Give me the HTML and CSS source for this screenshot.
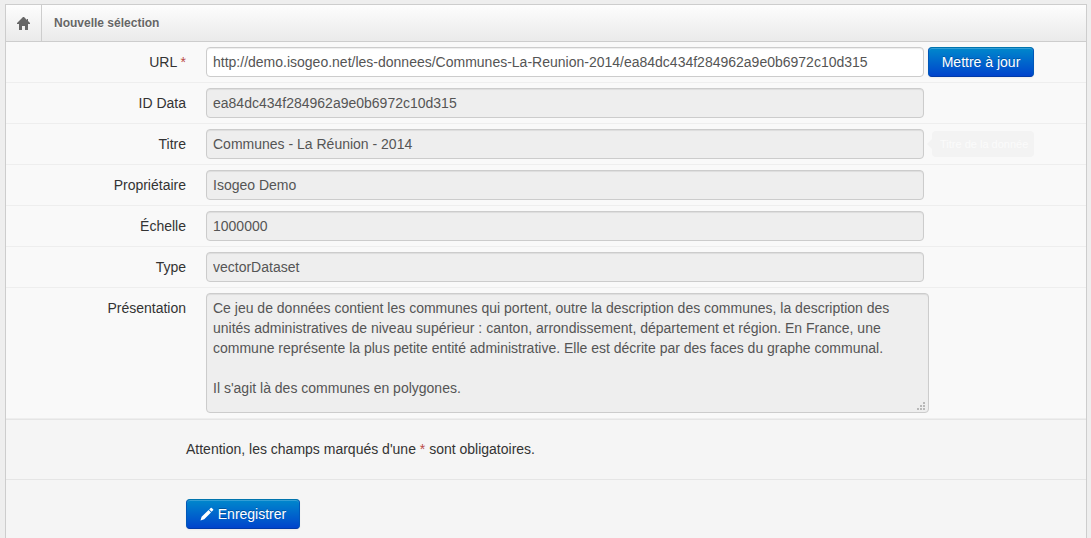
FILE: index.html
```html
<!DOCTYPE html>
<html lang="fr">
<head>
<meta charset="utf-8">
<title>Nouvelle sélection</title>
<link rel="stylesheet" href="styles.css">
</head>
<body>
<main class="widget">
  <header class="widget-title">
    <a class="home" href="#" aria-label="Accueil">
      <svg width="15" height="14" viewBox="0 0 15 14" aria-hidden="true"><path fill="#666" d="M7 0 H8 L11 3 V2 H12 V4 L14 6 V7 H12 V13 H9 V9 H6 V13 H3 V7 H1 V6 Z"/></svg>
    </a>
    <h1>Nouvelle sélection</h1>
  </header>
  <form class="form">
    <div class="row">
      <label for="url">URL <span class="required">*</span></label>
      <input class="field" id="url" type="text" value="http://demo.isogeo.net/les-donnees/Communes-La-Reunion-2014/ea84dc434f284962a9e0b6972c10d315">
      <button class="btn" type="button">Mettre à jour</button>
    </div>
    <div class="row">
      <label for="data">ID Data</label>
      <input class="field" id="data" type="text" readonly value="ea84dc434f284962a9e0b6972c10d315">
    </div>
    <div class="row">
      <label for="titre">Titre</label>
      <input class="field" id="titre" type="text" readonly value="Communes - La Réunion - 2014">
      <span class="tip" role="tooltip">Titre de la donnée</span>
    </div>
    <div class="row">
      <label for="owner">Propriétaire</label>
      <input class="field" id="owner" type="text" readonly value="Isogeo Demo">
    </div>
    <div class="row">
      <label for="scale">Échelle</label>
      <input class="field" id="scale" type="text" readonly value="1000000">
    </div>
    <div class="row">
      <label for="type">Type</label>
      <input class="field" id="type" type="text" readonly value="vectorDataset">
    </div>
    <div class="row row-text">
      <label for="about">Présentation</label>
      <div class="area">
        <textarea class="field" id="about" readonly>Ce jeu de données contient les communes qui portent, outre la description des communes, la description des unités administratives de niveau supérieur : canton, arrondissement, département et région. En France, une commune représente la plus petite entité administrative. Elle est décrite par des faces du graphe communal.

Il s'agit là des communes en polygones.</textarea>
        <svg class="grip" width="8" height="8" viewBox="0 0 8 8" aria-hidden="true"><path fill="#b8b8b8" d="M6 0h2v2h-2zM3 3h2v2h-2zM6 3h2v2h-2zM0 6h2v2h-2zM3 6h2v2h-2zM6 6h2v2h-2z"/></svg>
      </div>
    </div>
    <p class="actions">Attention, les champs marqués d'une <span class="required">*</span> sont obligatoires.</p>
    <div class="actions">
      <button class="btn btn-save" type="submit">
        <svg width="14" height="14" viewBox="0 0 14 14" aria-hidden="true"><path fill="#fff" d="M.5 13.5 L1.6 9.8 L8.6 3 L11 5.4 L4.2 12.3 Z M9.2 2.4 L10.7 .9 Q11.3 .4 11.8 .9 L13.1 2.2 Q13.6 2.7 13.1 3.3 L11.6 4.8 Z"/></svg>
        Enregistrer
      </button>
    </div>
  </form>
</main>
</body>
</html>
```

FILE: styles.css
```css
* { box-sizing: border-box; }

body {
  margin: 0;
  padding: 4px 4px 0 5px;
  height: 100vh;
  overflow: hidden;
  background: #eee;
  color: #333;
  font: 14px/20px "Liberation Sans", Arial, sans-serif;
}

.widget {
  min-height: 100vh;
  border: 1px solid #cdcdcd;
  background: #f5f5f5;
}

.widget-title {
  display: flex;
  height: 37px;
  border-bottom: 1px solid #cdcdcd;
  background: linear-gradient(#fdfdfd, #eaeaea);
}

.home {
  display: flex;
  align-items: center;
  justify-content: center;
  width: 36px;
  padding-top: 2px;
  border-right: 1px solid #cdcdcd;
}

.widget-title h1 {
  margin: 0;
  padding: 12px;
  color: #666;
  font-size: 12px;
  line-height: 12px;
  text-shadow: 0 1px 0 #fff;
}

.row {
  display: grid;
  grid-template-columns: 180px minmax(0, 1fr) 106px;
  column-gap: 4px;
  padding: 5px 52px 5px 0;
  border-bottom: 1px solid #eee;
  background: #f9f9f9;
}

.row label {
  padding-top: 5px;
  text-align: right;
}

.required { color: #b94a48; }

.field {
  display: block;
  width: 100%;
  height: 30px;
  padding: 4px 6px;
  border: 1px solid #ccc;
  border-radius: 4px;
  outline: 0;
  background: #fff;
  box-shadow: inset 0 1px 1px rgba(0, 0, 0, .075);
  color: #555;
  font: inherit;
}

.row > .field,
.area {
  width: auto;
  min-width: 0;
  margin-left: 16px;
}

.field:read-only { background: #eee; }

.area { position: relative; }
.row-text { padding-right: 47px; }

.area .field {
  height: 120px;
  resize: none;
}

.grip {
  position: absolute;
  right: 4px;
  bottom: 3px;
}

.btn {
  display: inline-flex;
  align-items: center;
  justify-content: center;
  gap: 4px;
  height: 30px;
  padding: 4px 12px;
  border: 1px solid;
  border-color: #0074ad #0057b8 #003aa8;
  border-radius: 4px;
  background: #04c linear-gradient(#08c, #04c);
  box-shadow: inset 0 1px 0 rgba(255, 255, 255, .2), 0 1px 2px rgba(0, 0, 0, .05);
  color: #fff;
  font: inherit;
  text-shadow: 0 -1px 0 rgba(0, 0, 0, .25);
  white-space: nowrap;
}

.btn-save { min-width: 114px; }

.tip {
  position: relative;
  align-self: center;
  margin-left: 4px;
  padding: 3px 8px;
  border-radius: 4px;
  background: #f3f3f3;
  color: #fbfbfb;
  font-size: 11px;
  white-space: nowrap;
}

.tip::before {
  content: "";
  position: absolute;
  top: 8px;
  left: -5px;
  border: 5px solid transparent;
  border-left: 0;
  border-right-color: #f3f3f3;
}

.actions {
  margin: 0;
  padding: 19px 20px 20px 180px;
  border-top: 1px solid #e5e5e5;
}
```
